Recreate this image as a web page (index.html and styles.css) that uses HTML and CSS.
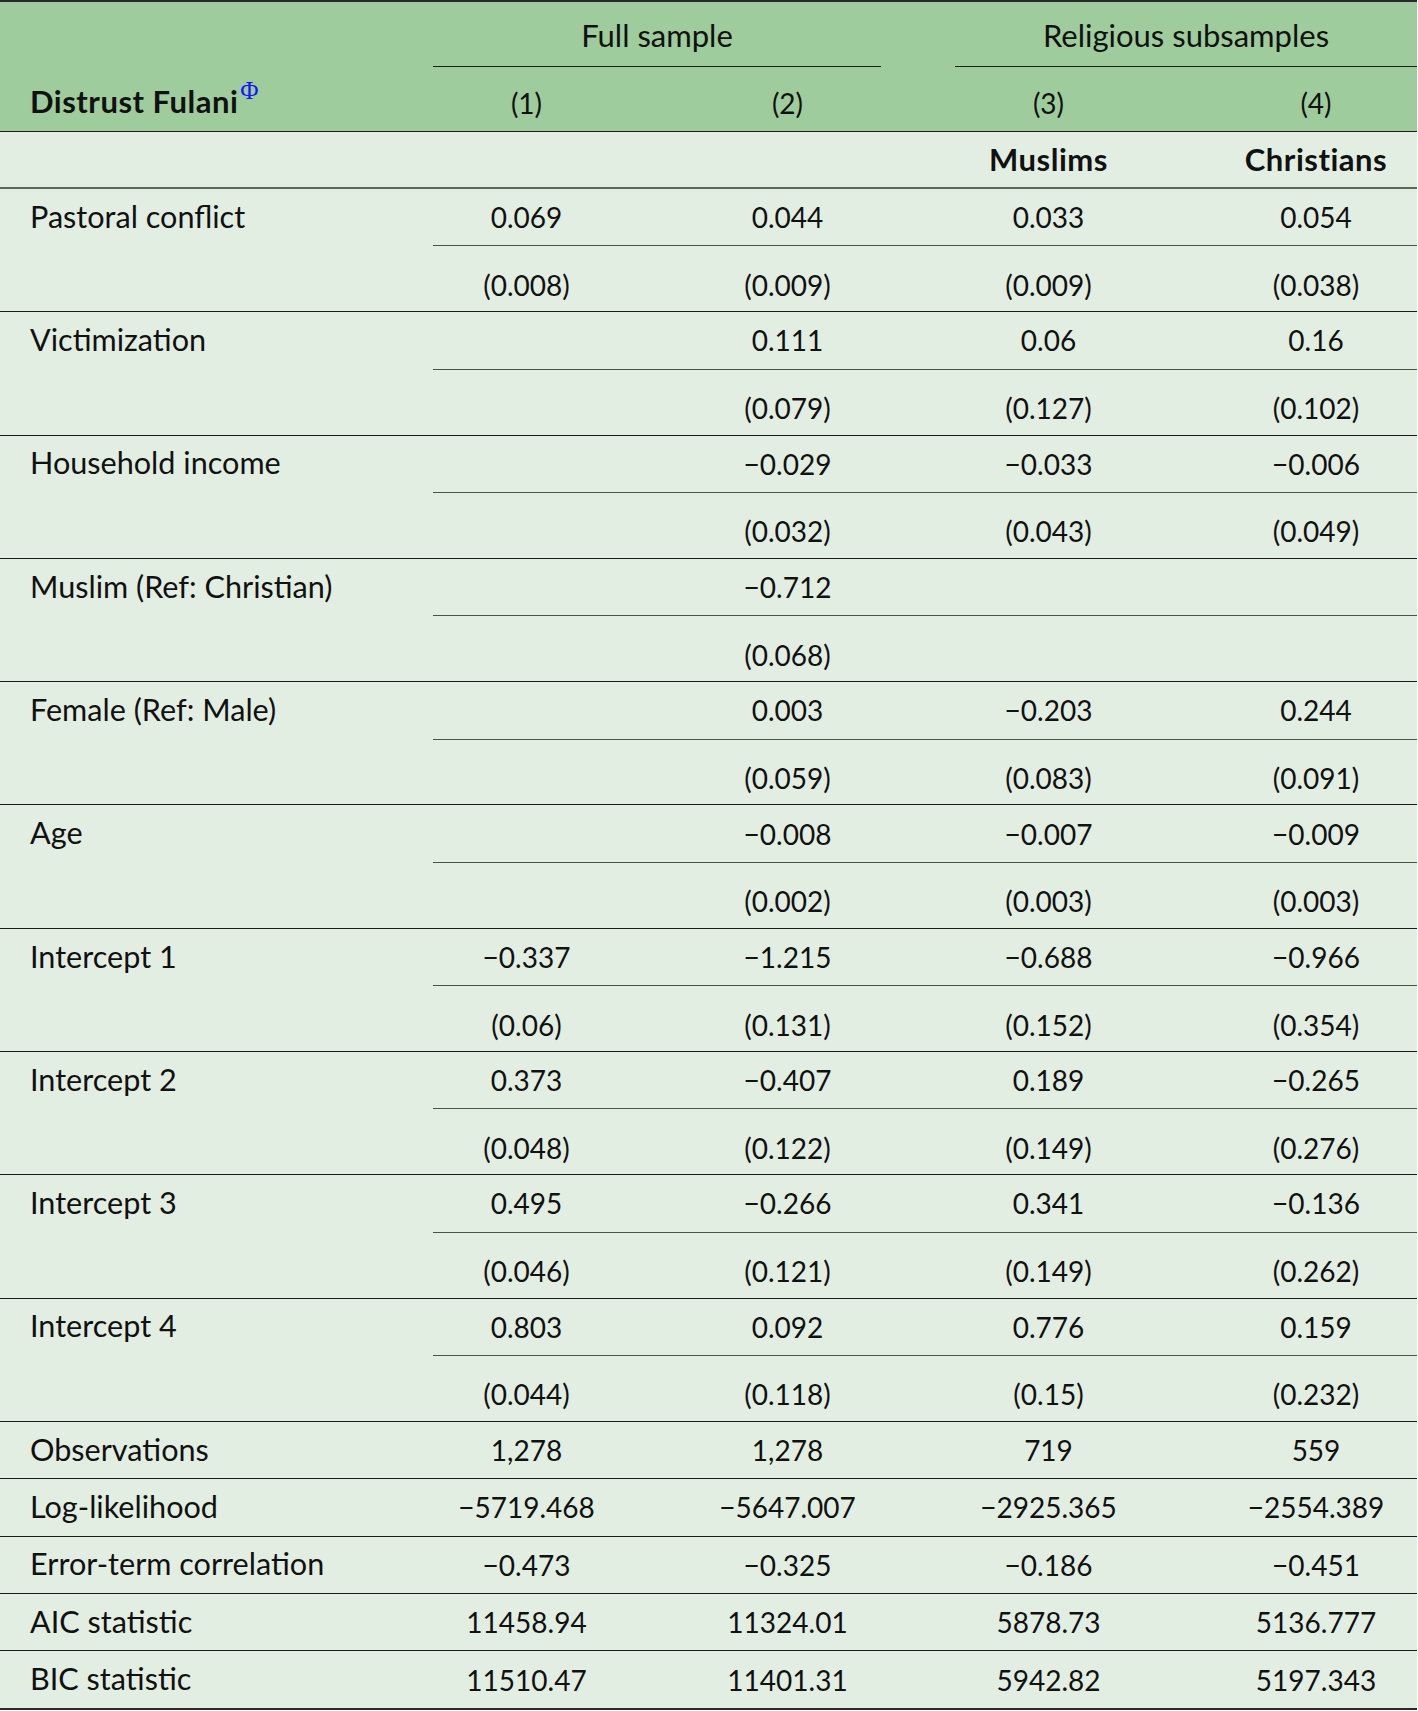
FILE: index.html
```html
<!DOCTYPE html>
<html lang="en">
<head>
<meta charset="utf-8">
<title>Distrust Fulani</title>
<link rel="stylesheet" href="styles.css">
</head>
<body>
<div class="tbl">
  <div class="thead">
    <div class="hrow spanrow">
      <div class="cell-label"></div>
      <div class="spanner span-full">Full sample</div>
      <div class="spanner span-rel">Religious subsamples</div>
    </div>
    <div class="hrow numrow">
      <div class="cell-label"><b class="strong">Distrust Fulani</b><sup class="phi">Φ</sup></div>
      <div class="c">(1)</div>
      <div class="c">(2)</div>
      <div class="c">(3)</div>
      <div class="c c4">(4)</div>
    </div>
  </div>
  <div class="hrow subhead">
    <div class="cell-label"></div>
    <div class="c"></div>
    <div class="c"></div>
    <div class="c"><b class="strong">Muslims</b></div>
    <div class="c c4"><b class="strong">Christians</b></div>
  </div>

  <div class="block">
    <div class="blabel">Pastoral conflict</div>
    <div class="bdata">
      <div class="vals coef"><div class="c">0.069</div><div class="c">0.044</div><div class="c">0.033</div><div class="c c4">0.054</div></div>
      <div class="rule"></div>
      <div class="vals se"><div class="c">(0.008)</div><div class="c">(0.009)</div><div class="c">(0.009)</div><div class="c c4">(0.038)</div></div>
    </div>
  </div>

  <div class="block">
    <div class="blabel">Victimization</div>
    <div class="bdata">
      <div class="vals coef"><div class="c"></div><div class="c">0.111</div><div class="c">0.06</div><div class="c c4">0.16</div></div>
      <div class="rule"></div>
      <div class="vals se"><div class="c"></div><div class="c">(0.079)</div><div class="c">(0.127)</div><div class="c c4">(0.102)</div></div>
    </div>
  </div>

  <div class="block">
    <div class="blabel">Household income</div>
    <div class="bdata">
      <div class="vals coef"><div class="c"></div><div class="c">−0.029</div><div class="c">−0.033</div><div class="c c4">−0.006</div></div>
      <div class="rule"></div>
      <div class="vals se"><div class="c"></div><div class="c">(0.032)</div><div class="c">(0.043)</div><div class="c c4">(0.049)</div></div>
    </div>
  </div>

  <div class="block">
    <div class="blabel">Muslim (Ref: Christian)</div>
    <div class="bdata">
      <div class="vals coef"><div class="c"></div><div class="c">−0.712</div><div class="c"></div><div class="c c4"></div></div>
      <div class="rule"></div>
      <div class="vals se"><div class="c"></div><div class="c">(0.068)</div><div class="c"></div><div class="c c4"></div></div>
    </div>
  </div>

  <div class="block">
    <div class="blabel">Female (Ref: Male)</div>
    <div class="bdata">
      <div class="vals coef"><div class="c"></div><div class="c">0.003</div><div class="c">−0.203</div><div class="c c4">0.244</div></div>
      <div class="rule"></div>
      <div class="vals se"><div class="c"></div><div class="c">(0.059)</div><div class="c">(0.083)</div><div class="c c4">(0.091)</div></div>
    </div>
  </div>

  <div class="block">
    <div class="blabel">Age</div>
    <div class="bdata">
      <div class="vals coef"><div class="c"></div><div class="c">−0.008</div><div class="c">−0.007</div><div class="c c4">−0.009</div></div>
      <div class="rule"></div>
      <div class="vals se"><div class="c"></div><div class="c">(0.002)</div><div class="c">(0.003)</div><div class="c c4">(0.003)</div></div>
    </div>
  </div>

  <div class="block">
    <div class="blabel">Intercept 1</div>
    <div class="bdata">
      <div class="vals coef"><div class="c">−0.337</div><div class="c">−1.215</div><div class="c">−0.688</div><div class="c c4">−0.966</div></div>
      <div class="rule"></div>
      <div class="vals se"><div class="c">(0.06)</div><div class="c">(0.131)</div><div class="c">(0.152)</div><div class="c c4">(0.354)</div></div>
    </div>
  </div>

  <div class="block">
    <div class="blabel">Intercept 2</div>
    <div class="bdata">
      <div class="vals coef"><div class="c">0.373</div><div class="c">−0.407</div><div class="c">0.189</div><div class="c c4">−0.265</div></div>
      <div class="rule"></div>
      <div class="vals se"><div class="c">(0.048)</div><div class="c">(0.122)</div><div class="c">(0.149)</div><div class="c c4">(0.276)</div></div>
    </div>
  </div>

  <div class="block">
    <div class="blabel">Intercept 3</div>
    <div class="bdata">
      <div class="vals coef"><div class="c">0.495</div><div class="c">−0.266</div><div class="c">0.341</div><div class="c c4">−0.136</div></div>
      <div class="rule"></div>
      <div class="vals se"><div class="c">(0.046)</div><div class="c">(0.121)</div><div class="c">(0.149)</div><div class="c c4">(0.262)</div></div>
    </div>
  </div>

  <div class="block">
    <div class="blabel">Intercept 4</div>
    <div class="bdata">
      <div class="vals coef"><div class="c">0.803</div><div class="c">0.092</div><div class="c">0.776</div><div class="c c4">0.159</div></div>
      <div class="rule"></div>
      <div class="vals se"><div class="c">(0.044)</div><div class="c">(0.118)</div><div class="c">(0.15)</div><div class="c c4">(0.232)</div></div>
    </div>
  </div>

  <div class="hrow stat">
    <div class="cell-label">Observations</div>
    <div class="c">1,278</div><div class="c">1,278</div><div class="c">719</div><div class="c c4">559</div>
  </div>
  <div class="hrow stat">
    <div class="cell-label">Log-likelihood</div>
    <div class="c">−5719.468</div><div class="c">−5647.007</div><div class="c">−2925.365</div><div class="c c4">−2554.389</div>
  </div>
  <div class="hrow stat">
    <div class="cell-label">Error-term correlation</div>
    <div class="c">−0.473</div><div class="c">−0.325</div><div class="c">−0.186</div><div class="c c4">−0.451</div>
  </div>
  <div class="hrow stat">
    <div class="cell-label">AIC statistic</div>
    <div class="c">11458.94</div><div class="c">11324.01</div><div class="c">5878.73</div><div class="c c4">5136.777</div>
  </div>
  <div class="hrow stat last">
    <div class="cell-label">BIC statistic</div>
    <div class="c">11510.47</div><div class="c">11401.31</div><div class="c">5942.82</div><div class="c c4">5197.343</div>
  </div>
</div>
</body>
</html>
```

FILE: styles.css
```css
html, body {
  margin: 0;
  padding: 0;
  background: #ffffff;
}

.tbl {
  width: 1417px;
  background: #e3eee3;
  color: #111111;
  font-family: Lato, "Open Sans", "Noto Sans", sans-serif;
  font-size: 30.6px;
  line-height: 1;
}

.thead {
  background: #9ecc9c;
  border-top: 2px solid #2a2a2a;
  border-bottom: 1px solid #1c1c1c;
}

.hrow {
  display: grid;
  grid-template-columns: 396px 261px 261px 261px 1fr;
  align-items: center;
}

.c {
  text-align: center;
  white-space: nowrap;
  font-size: 28px;
}

.c4 {
  padding-left: 36px;
}

.strong {
  font-weight: 700;
  font-size: 31px;
  letter-spacing: 0.5px;
}

.cell-label {
  padding-left: 30px;
  white-space: nowrap;
}

.spanrow {
  height: 65px;
  align-items: stretch;
}

.spanner {
  display: flex;
  align-items: center;
  justify-content: center;
  border-bottom: 1px solid #1c1c1c;
  padding-top: 3px;
  font-size: 31px;
}

.span-full {
  grid-column: 2 / 4;
  margin: 0 37px;
}

.span-rel {
  grid-column: 4 / 6;
  margin-left: 37px;
}

.numrow {
  height: 64px;
  padding-top: 5px;
  box-sizing: border-box;
}

.numrow .c {
  padding-top: 2px;
}

.phi {
  font-family: "Liberation Serif", "DejaVu Serif", serif;
  font-weight: 400;
  color: #1414ff;
  font-size: 25px;
  line-height: 0;
  vertical-align: 14px;
  margin-left: 2px;
}

.subhead {
  height: 57px;
  box-sizing: border-box;
  border-bottom: 2px solid #5d665d;
}

.block {
  display: grid;
  grid-template-columns: 396px 1fr;
  border-bottom: 1px solid #1c1c1c;
}

.blabel {
  height: 56.4px;
  display: flex;
  align-items: center;
  padding-left: 30px;
  white-space: nowrap;
}

.bdata {
  display: flex;
  flex-direction: column;
}

.vals {
  display: grid;
  grid-template-columns: 261px 261px 261px 1fr;
  align-items: center;
}

.coef {
  height: 56.4px;
}

.se {
  height: 64.9px;
  padding-top: 12px;
  box-sizing: border-box;
}

.rule {
  height: 1px;
  margin-left: 37px;
  background: #4a534a;
}

.stat {
  height: 57.4px;
  box-sizing: border-box;
  border-bottom: 1px solid #1c1c1c;
}

.stat.last {
  height: 58.4px;
  border-bottom: 2px solid #2a2a2a;
}
```
